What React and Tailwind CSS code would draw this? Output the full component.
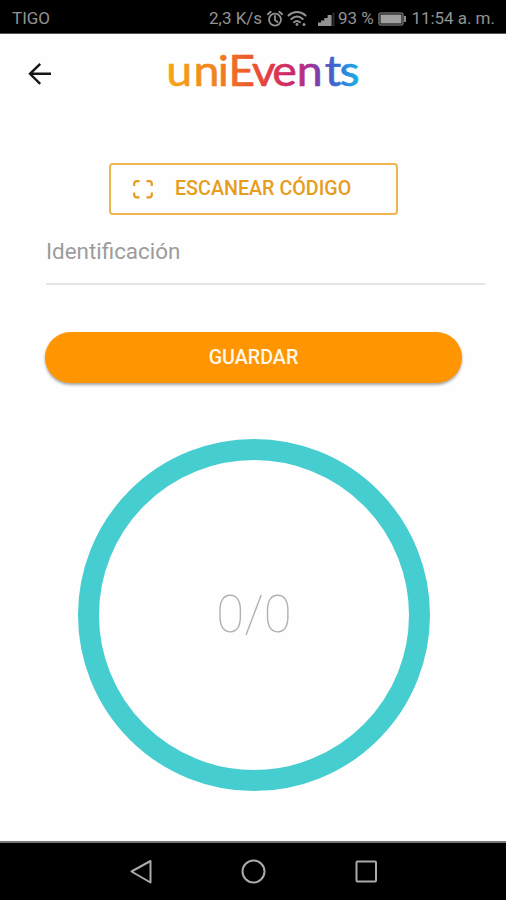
function StatusBar() {
  return (
    <header className="flex h-[34px] items-center border-b border-[#555] bg-black pt-1 pl-3 text-[17px] leading-none whitespace-nowrap text-[#929292]">
      <span className="w-[197px]">TIGO</span>
      <span className="w-[57px]">2,3 K/s</span>
      <svg className="h-[18px] w-[18px]" viewBox="0 0 18 18" fill="none" stroke="currentColor" strokeWidth="1.8" strokeLinecap="round">
        <circle cx="9" cy="9.6" r="6" />
        <path d="M9 6v4l2.5 2M1.8 4.2 4.7 1.8M16.2 4.2l-2.9-2.4" />
      </svg>
      <svg className="ml-[3px] h-[18px] w-[20px]" viewBox="0 0 20 18" fill="none" stroke="currentColor" strokeWidth="2" strokeLinecap="round">
        <path d="M1.5 5.5c5-4.6 12-4.6 17 0M4.3 9c3.5-3.2 7.9-3.2 11.4 0M7 12.2c2-1.7 4-1.7 6 0" />
        <circle cx="10" cy="14.5" r="1.4" fill="currentColor" stroke="none" />
        <circle cx="17" cy="14.5" r="1.5" fill="currentColor" stroke="none" />
      </svg>
      <svg className="ml-[11px] h-[18px] w-[18px]" viewBox="0 0 18 18" fill="currentColor">
        <path d="M0 12.500h3V16H0zM3 10.500h3.300V16H3zM6.300 8h3.300v8H6.300zM9.600 5h4v11h-4z" />
        <path d="M14.500 2.500h2V16h-2z" opacity=".3" />
      </svg>
      <span className="ml-[2px] w-[39px]">93 %</span>
      <svg className="h-[14px] w-[31px]" viewBox="0 0 31 14" fill="none">
        <rect x="2" y="1" width="24" height="12" rx="2" stroke="#666" strokeWidth="1.600" />
        <rect x="3.500" y="2.500" width="21" height="9" fill="#a0a0a0" />
        <path d="M28 4v6" stroke="#888" strokeWidth="2" />
      </svg>
      <span className="ml-[3.500px] tracking-[-0.050px]">11:54 a. m.</span>
    </header>
  );
}

function Logo() {
  return (
    <svg className="h-[50px] w-[210px]" viewBox="160 45 210 50" role="img" aria-label="uniEvents">
      <defs>
        <linearGradient id="brand" gradientUnits="userSpaceOnUse" x1="155.6" y1="0" x2="331.5" y2="0">
          <stop offset="0" stopColor="#f6a51a" />
          <stop offset=".25" stopColor="#f08420" />
          <stop offset=".45" stopColor="#ec5530" />
          <stop offset=".54" stopColor="#e03a4c" />
          <stop offset=".64" stopColor="#c92a6c" />
          <stop offset=".74" stopColor="#ad3190" />
          <stop offset=".81" stopColor="#6a45b8" />
          <stop offset=".88" stopColor="#3a68d0" />
          <stop offset="1" stopColor="#1aaee8" />
        </linearGradient>
      </defs>
      <text
        transform="scale(1.08 1)"
        x="154 179.2 201.6 211.4 233.2 252.1 274.7 300.6 314.4"
        y="86"
        fill="url(#brand)"
        stroke="url(#brand)"
        strokeWidth="0.6"
        strokeLinejoin="round"
        className="font-[Lato,sans-serif] text-[43px]"
      >
        uniEvents
      </text>
    </svg>
  );
}

export default function App() {
  return (
    <div className="flex h-[900px] w-[506px] flex-col overflow-hidden bg-[#fefefe] font-[Roboto,sans-serif]">
      <StatusBar />
      <div className="flex h-[80px] items-start pt-[11px]">
        <button className="mt-[16px] ml-[27px] h-[26px] w-[26px]" aria-label="Atrás">
          <svg viewBox="0 0 26 26" fill="none" stroke="#161616" strokeWidth="2.400">
            <path d="M24 12.800H3M13.200 2.800 3 12.800l10.200 10" />
          </svg>
        </button>
        <div className="ml-[107px]">
          <Logo />
        </div>
      </div>
      <main className="flex flex-1 flex-col">
        <button className="mt-[49px] ml-[109px] flex h-[52px] w-[289px] items-center rounded-[4px] border-2 border-[#efb650] pl-[22px] text-[#e79c1c]">
          <svg className="h-[19px] w-[20px]" viewBox="0 0 20 19" fill="none" stroke="currentColor" strokeWidth="2.200">
            <path d="M1.200 6V3.700q0-2.500 2.500-2.500H6.500M13.500 1.200h2.800q2.500 0 2.500 2.500V6M18.800 12.500v2.300q0 2.500-2.500 2.500h-2.800M6.500 17.300H3.700q-2.500 0-2.500-2.500v-2.300" />
          </svg>
          <span className="ml-[22px] text-[19.700px] leading-none font-medium whitespace-nowrap">ESCANEAR CÓDIGO</span>
        </button>
        <div className="mt-[18px] ml-[46px] flex h-[52px] w-[439px] items-start border-b-2 border-[#e4e4e4] pt-[6px] text-[22.400px] leading-[24px] text-[#9c9c9c]">
          Identificación
        </div>
        <button className="mt-[47px] ml-[45px] h-[51px] w-[417px] shrink-0 rounded-full bg-[#ff9500] text-[19.700px] leading-none font-medium text-[#fff8e8] shadow-[0_2px_3px_rgba(0,0,0,0.35)]">
          GUARDAR
        </button>
        <div className="mt-[56px] ml-[78px] flex h-[352px] w-[352px] items-center justify-center rounded-full border-[21px] border-[#46cdd0] pb-[2px] text-[51px] leading-none font-thin text-[#b0b0b0]">
          0/0
        </div>
      </main>
      <nav className="flex h-[59px] items-center border-t-2 border-[#777] bg-black text-[#aaa]">
        <svg className="ml-[130px] h-[26px] w-[24px]" viewBox="0 0 24 26" fill="none" stroke="currentColor" strokeWidth="2" strokeLinejoin="round">
          <path d="M20.500 2v21.500L1.500 12.500z" />
        </svg>
        <svg className="ml-[87px] h-[26px] w-[26px]" viewBox="0 0 26 26" fill="none" stroke="currentColor" strokeWidth="2">
          <circle cx="12.500" cy="12.500" r="11" />
        </svg>
        <svg className="ml-[88px] h-[24px] w-[24px]" viewBox="0 0 24 24" fill="none" stroke="currentColor" strokeWidth="2">
          <rect x="1.500" y="1.500" width="19.500" height="20" rx="1" />
        </svg>
      </nav>
    </div>
  );
}
